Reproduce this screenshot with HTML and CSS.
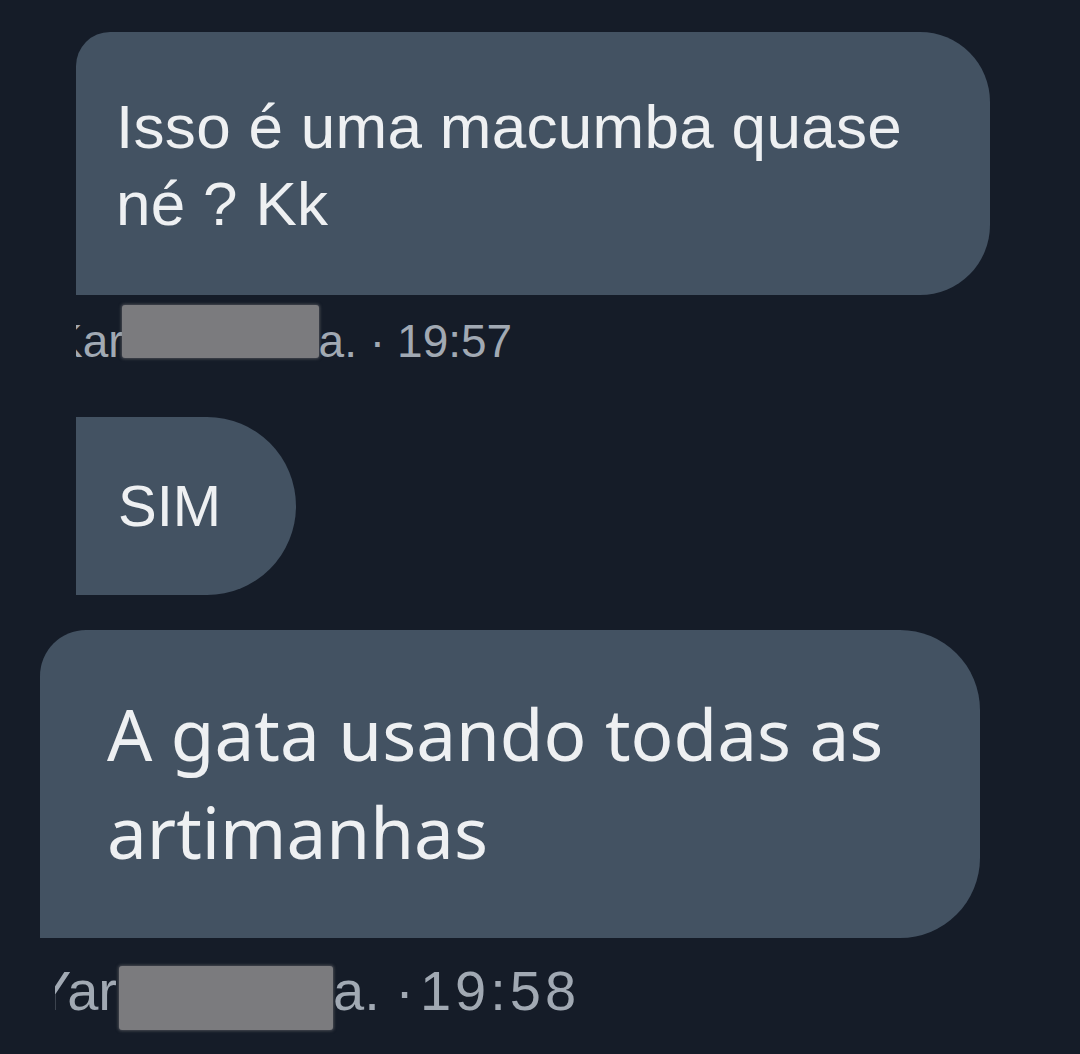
FILE: index.html
```html
<!DOCTYPE html>
<html lang="pt">
<head>
<meta charset="utf-8">
<title>Mensagens</title>
<link rel="stylesheet" href="styles.css">
</head>
<body>
<main class="thread">
  <div class="bubble bubble-first">
    <p class="text">Isso é uma macumba quase<br>né ? Kk</p>
  </div>
  <div class="meta meta-first">
    <span class="name-clip"><span class="name-start">Kar</span></span><span class="redact redact-first"></span><span class="meta-rest">a. ·<span class="time">19:57</span></span>
  </div>

  <div class="bubble bubble-sim">
    <p class="text">SIM</p>
  </div>

  <div class="bubble bubble-last">
    <p class="text">A gata usando todas as<br>artimanhas</p>
  </div>
  <div class="meta meta-last">
    <span class="name-clip"><span class="name-start">Yar</span></span><span class="redact redact-last"></span><span class="meta-rest">a. ·<span class="time">19:58</span></span>
  </div>
</main>
</body>
</html>
```

FILE: styles.css
```css
* { box-sizing: border-box; }

html, body {
  margin: 0;
  padding: 0;
  background: #151c28;
  width: 1080px;
  height: 1054px;
  overflow: hidden;
}

.thread {
  display: flex;
  flex-direction: column;
  align-items: flex-start;
  padding-top: 32px;
}

.bubble {
  background: #435262;
  color: #eef0f2;
}

.text { margin: 0; }

.bubble-first {
  margin-left: 76px;
  width: 914px;
  padding: 56px 40px 53px 40px;
  border-radius: 34px 70px 70px 0;
  font-family: "Liberation Sans", Arial, sans-serif;
  font-size: 62px;
  line-height: 77px;
  letter-spacing: 0.3px;
}

.meta {
  display: flex;
  align-items: flex-end;
  color: #a1a9b3;
  font-family: "Liberation Sans", Arial, sans-serif;
  line-height: 1;
  white-space: pre;
}

.name-clip {
  display: block;
  overflow: hidden;
}
.name-start { display: block; }

.redact {
  display: block;
  background: #7b7b7e;
  border-radius: 3px;
  box-shadow: 0 0 3px 1px rgba(123,123,126,0.5);
}

.meta-first {
  margin-top: 10px;
  margin-left: 76px;
  font-size: 46px;
}
.meta-first .name-clip { margin-bottom: -6px; }
.meta-first .name-start { margin-left: -24px; }
.meta-first .meta-rest { margin-bottom: -6px; }
.meta-first .time { margin-left: 12px; }
.redact-first {
  width: 197px;
  height: 53px;
  margin-left: -2px;
}

.bubble-sim {
  margin-top: 59px;
  margin-left: 76px;
  height: 178px;
  padding: 0 75px 0 42px;
  border-radius: 0 89px 89px 0;
  font-family: "Liberation Sans", Arial, sans-serif;
  font-size: 58px;
  line-height: 178px;
}

.bubble-last {
  margin-top: 35px;
  margin-left: 40px;
  width: 940px;
  padding: 55px 40px 57px 67px;
  border-radius: 46px 80px 80px 0;
  font-family: "Noto Sans", "Open Sans", sans-serif;
  font-size: 71px;
  line-height: 98px;
}

.meta-last {
  margin-top: 25px;
  margin-left: 55px;
  font-size: 56px;
}
.meta-last .name-clip { margin-bottom: 11px; }
.meta-last .name-start { margin-left: -21px; }
.meta-last .meta-rest { margin-bottom: 11px; }
.meta-last .time { letter-spacing: 4px; margin-left: 6px; }
.redact-last {
  width: 214px;
  height: 64px;
  margin-left: 2px;
}
```
